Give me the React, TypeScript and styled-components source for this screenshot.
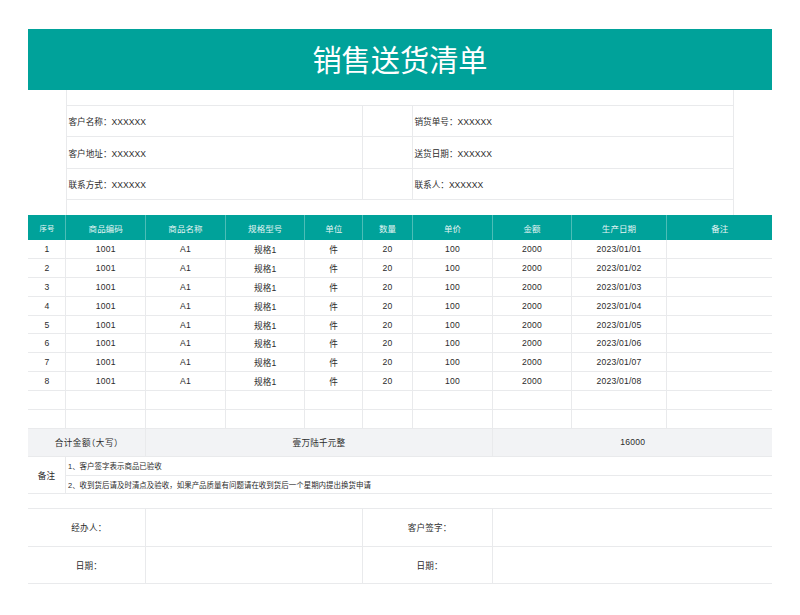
import React from 'react';
import styled, { createGlobalStyle } from 'styled-components';

const Global = createGlobalStyle`
  html, body { margin: 0; padding: 0; background: #fff; }
  body { font-family: "Liberation Sans", "Noto Sans CJK SC", sans-serif; color: #2b2b2b; }
`;

const LINE = '#e9eaec';
const COLS = '38px 79.5px 80px 79.5px 57.5px 50px 80px 79px 95px 105.5px';

const Sheet = styled.main`
  width: 744px;
  margin-left: 28px;
  padding-top: 29px;
  height: 586px;
`;
const Title = styled.h1`
  margin: 0;
  height: 61px;
  background: #00a29a;
  color: #fff;
  font-size: 29.2px;
  font-weight: 400;
  line-height: 58px;
  text-align: center;
  font-family: "Noto Sans CJK SC", sans-serif;
`;
const InfoBlock = styled.section`
  margin: 0 38px 0 38px;
  border-left: 1px solid ${LINE};
  border-right: 1px solid ${LINE};
  display: grid;
  grid-template-columns: 296px 50px 1fr;
  grid-template-rows: 16px 31px 32px 31px 15px;
`;
const InfoBlank = styled.div`
  grid-column: 1 / -1;
  border-bottom: 1px solid ${LINE};
`;
const InfoCell = styled.div<{ $last?: boolean }>`
  display: flex;
  align-items: center;
  padding-left: 1.5px;
  font-size: 8.6px;
  border-bottom: 1px solid ${LINE};
  border-right: ${p => (p.$last ? 'none' : `1px solid ${LINE}`)};
`;
const HeaderRow = styled.div`
  display: grid;
  grid-template-columns: ${COLS};
  height: 25px;
  background: #00a29a;
`;
const HeaderCell = styled.div<{ $last?: boolean; $small?: boolean }>`
  display: flex;
  align-items: center;
  justify-content: center;
  padding-left: 1px;
  color: #e4f5f4;
  font-size: ${p => (p.$small ? '7.4px' : '8.5px')};
  letter-spacing: 0.1px;
  border-right: ${p => (p.$last ? 'none' : '1px solid #4dbdb7')};
`;
const BodyRow = styled.div`
  display: grid;
  grid-template-columns: ${COLS};
  height: 18.9px;
  box-sizing: border-box;
  border-bottom: 1px solid ${LINE};
`;
const BodyCell = styled.div<{ $last?: boolean; $wide?: boolean }>`
  display: flex;
  align-items: center;
  justify-content: center;
  padding-left: 1px;
  font-size: 8.6px;
  letter-spacing: ${p => (p.$wide ? '0.5px' : '0.2px')};
  font-feature-settings: "halt";
  border-right: ${p => (p.$last ? 'none' : `1px solid ${LINE}`)};
`;
const TotalRow = styled.div`
  display: grid;
  grid-template-columns: 117.5px 347px 1fr;
  height: 28px;
  box-sizing: border-box;
  background: #f2f3f5;
  border-bottom: 1px solid ${LINE};
`;
const NotesBlock = styled.section`
  display: grid;
  grid-template-columns: 38px 1fr;
  grid-template-rows: 19px 18px;
`;
const NotesLabel = styled.div`
  grid-row: 1 / 3;
  display: flex;
  align-items: center;
  justify-content: center;
  font-size: 8.6px;
  letter-spacing: 0.2px;
  border-right: 1px solid ${LINE};
  border-bottom: 1px solid ${LINE};
`;
const NoteLine = styled.div`
  display: flex;
  align-items: center;
  padding-left: 2px;
  font-size: 7.47px;
  border-bottom: 1px solid ${LINE};
`;
const Spacer = styled.div`
  height: 15px;
  box-sizing: border-box;
  border-bottom: 1px solid ${LINE};
`;
const SignRow = styled.div<{ $height: number }>`
  display: grid;
  grid-template-columns: 117.5px 217px 130px 1fr;
  height: ${p => p.$height}px;
  box-sizing: border-box;
  border-bottom: 1px solid ${LINE};
`;

const headers = ['序号', '商品编码', '商品名称', '规格型号', '单位', '数量', '单价', '金额', '生产日期', '备注'];
const rows = Array.from({ length: 8 }, (_, i) => [String(i + 1), '1001', 'A1', '规格1', '件', '20', '100', '2000', `2023/01/0${i + 1}`, '']);
const blanks = [Array(10).fill(''), Array(10).fill('')];
const info = [
  ['客户名称：XXXXXX', '销货单号：XXXXXX'],
  ['客户地址：XXXXXX', '送货日期：XXXXXX'],
  ['联系方式：XXXXXX', '联系人：XXXXXX'],
];

export default function App() {
  return (
    <>
      <Global />
      <Sheet>
        <Title>销售送货清单</Title>
        <InfoBlock>
          <InfoBlank />
          {info.map(([a, b]) => (
            <React.Fragment key={a}>
              <InfoCell>{a}</InfoCell>
              <InfoCell />
              <InfoCell $last>{b}</InfoCell>
            </React.Fragment>
          ))}
          <div />
        </InfoBlock>
        <HeaderRow>
          {headers.map((h, i) => (
            <HeaderCell key={h} $last={i === 9} $small={i === 0}>{h}</HeaderCell>
          ))}
        </HeaderRow>
        {[...rows, ...blanks].map((r, i) => (
          <BodyRow key={i}>
            {r.map((c: string, j: number) => (
              <BodyCell key={j} $last={j === 9}>{c}</BodyCell>
            ))}
          </BodyRow>
        ))}
        <TotalRow>
          <BodyCell $wide>合计金额（大写）</BodyCell>
          <BodyCell>壹万陆千元整</BodyCell>
          <BodyCell $last>16000</BodyCell>
        </TotalRow>
        <NotesBlock>
          <NotesLabel>备注</NotesLabel>
          <NoteLine>1、客户签字表示商品已验收</NoteLine>
          <NoteLine>2、收到货后请及时清点及验收，如果产品质量有问题请在收到货后一个星期内提出换货申请</NoteLine>
        </NotesBlock>
        <Spacer />
        <SignRow $height={38}>
          <BodyCell>经办人：</BodyCell>
          <BodyCell />
          <BodyCell>客户签字：</BodyCell>
          <BodyCell $last />
        </SignRow>
        <SignRow $height={37}>
          <BodyCell>日期：</BodyCell>
          <BodyCell />
          <BodyCell>日期：</BodyCell>
          <BodyCell $last />
        </SignRow>
      </Sheet>
    </>
  );
}
